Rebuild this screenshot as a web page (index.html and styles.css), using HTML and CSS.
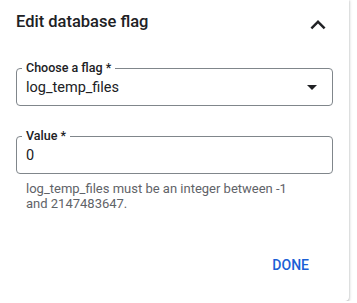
FILE: index.html
```html
<!DOCTYPE html>
<html lang="en">
<head>
  <meta charset="UTF-8">
  <title>Edit database flag</title>
  <link rel="stylesheet" href="styles.css">
</head>
<body>

  <div class="card">
    <div class="card-header">
      <h2 class="card-title">Edit database flag</h2>
      <button class="icon-btn" aria-label="Collapse">
        <svg viewBox="0 0 24 24" width="30" height="30"><path d="M12 8l-6 6 1.41 1.41L12 10.83l4.59 4.58L18 14z" fill="#202124"/></svg>
      </button>
    </div>

    <div class="field field-select">
      <label class="field-label">Choose a flag *</label>
      <div class="field-box">
        <span class="field-value">log_temp_files</span>
        <svg class="drop-arrow" viewBox="0 0 24 24" width="24" height="24"><path d="M7 10l5 5 5-5z" fill="#202124"/></svg>
      </div>
    </div>

    <div class="field field-input">
      <label class="field-label">Value *</label>
      <div class="field-box">
        <span class="field-value">0</span>
      </div>
      <div class="field-hint">log_temp_files must be an integer between -1 and 2147483647.</div>
    </div>

    <div class="card-actions">
      <button class="text-btn">DONE</button>
    </div>
  </div>

</body>
</html>
```

FILE: styles.css
```css
body {
  margin: 0;
  background: #fff;
  font-family: Roboto, "Liberation Sans", Arial, sans-serif;
  color: #202124;
}
.card {
  width: 349px;
  height: 301px;
  box-sizing: border-box;
  padding: 10px 16px 0 16px;
  background: #fff;
  border-radius: 0 0 4px 0;
  box-shadow: 0 1px 2px rgba(60, 64, 67, 0.3), 0 1px 3px 1px rgba(60, 64, 67, 0.15);
}
.card-header {
  display: flex;
  justify-content: space-between;
  align-items: flex-start;
  height: 30px;
}
.card-title {
  margin: 0;
  font-size: 16.5px;
  font-weight: 500;
  line-height: 24px;
}
.icon-btn {
  border: none;
  background: none;
  padding: 0;
  width: 30px;
  height: 30px;
  display: block;
}
.icon-btn svg {
  display: block;
}
.field {
  position: relative;
}
.field-select {
  margin-top: 28px;
}
.field-input {
  margin-top: 30px;
}
.field-box {
  display: flex;
  align-items: center;
  height: 38px;
  box-sizing: border-box;
  padding: 0 9px;
  border: 1px solid #80868b;
  border-radius: 4px;
}
.field-label {
  position: absolute;
  left: 6px;
  top: -7px;
  padding: 0 4px;
  background: #fff;
  font-size: 12.5px;
  font-weight: 500;
  line-height: 14px;
  color: #202124;
}
.field-value {
  flex: 1;
  font-size: 14.5px;
  line-height: 20px;
  padding-top: 2px;
}
.drop-arrow {
  display: block;
  margin-right: -1px;
}
.field-hint {
  margin-top: 7px;
  padding-left: 10px;
  max-width: 272px;
  font-size: 13px;
  line-height: 15px;
  color: #5f6368;
}
.card-actions {
  display: flex;
  justify-content: flex-end;
  margin-top: 36px;
}
.text-btn {
  border: none;
  background: none;
  height: 36px;
  padding: 0 8px;
  margin-right: 16px;
  font-family: inherit;
  font-size: 14px;
  font-weight: 500;
  color: #1a5fd6;
}
```
